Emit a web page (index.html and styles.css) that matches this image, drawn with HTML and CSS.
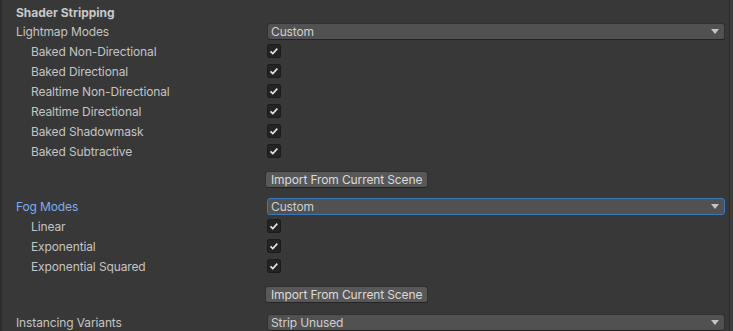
FILE: index.html
```html
<!DOCTYPE html>
<html>
<head>
<meta charset="utf-8">
<link rel="stylesheet" href="styles.css">
</head>
<body>
<div class="panel">
  <div class="main">
    <div class="header">Shader Stripping</div>

    <div class="row">
      <span class="label">Lightmap Modes</span>
      <div class="dropdown"><span>Custom</span><svg class="arrow" width="8" height="5" viewBox="0 0 8 5"><path d="M0 0H8L4 5Z" fill="#c4c4c4"/></svg></div>
    </div>
    <div class="row"><span class="label sub">Baked Non-Directional</span><span class="check"><svg width="14" height="14" viewBox="0 0 14 14"><path d="M3.5 7.3L5.8 9.5L10.3 4.6" fill="none" stroke="#e8e8e8" stroke-width="1.6"/></svg></span></div>
    <div class="row"><span class="label sub">Baked Directional</span><span class="check"><svg width="14" height="14" viewBox="0 0 14 14"><path d="M3.5 7.3L5.8 9.5L10.3 4.6" fill="none" stroke="#e8e8e8" stroke-width="1.6"/></svg></span></div>
    <div class="row"><span class="label sub">Realtime Non-Directional</span><span class="check"><svg width="14" height="14" viewBox="0 0 14 14"><path d="M3.5 7.3L5.8 9.5L10.3 4.6" fill="none" stroke="#e8e8e8" stroke-width="1.6"/></svg></span></div>
    <div class="row"><span class="label sub">Realtime Directional</span><span class="check"><svg width="14" height="14" viewBox="0 0 14 14"><path d="M3.5 7.3L5.8 9.5L10.3 4.6" fill="none" stroke="#e8e8e8" stroke-width="1.6"/></svg></span></div>
    <div class="row"><span class="label sub">Baked Shadowmask</span><span class="check"><svg width="14" height="14" viewBox="0 0 14 14"><path d="M3.5 7.3L5.8 9.5L10.3 4.6" fill="none" stroke="#e8e8e8" stroke-width="1.6"/></svg></span></div>
    <div class="row"><span class="label sub">Baked Subtractive</span><span class="check"><svg width="14" height="14" viewBox="0 0 14 14"><path d="M3.5 7.3L5.8 9.5L10.3 4.6" fill="none" stroke="#e8e8e8" stroke-width="1.6"/></svg></span></div>
    <div class="btnrow first"><span></span><button class="btn">Import From Current Scene</button></div>

    <div class="row">
      <span class="label focus">Fog Modes</span>
      <div class="dropdown focused"><span>Custom</span><svg class="arrow" width="8" height="5" viewBox="0 0 8 5"><path d="M0 0H8L4 5Z" fill="#c4c4c4"/></svg></div>
    </div>
    <div class="row"><span class="label sub">Linear</span><span class="check"><svg width="14" height="14" viewBox="0 0 14 14"><path d="M3.5 7.3L5.8 9.5L10.3 4.6" fill="none" stroke="#e8e8e8" stroke-width="1.6"/></svg></span></div>
    <div class="row"><span class="label sub">Exponential</span><span class="check"><svg width="14" height="14" viewBox="0 0 14 14"><path d="M3.5 7.3L5.8 9.5L10.3 4.6" fill="none" stroke="#e8e8e8" stroke-width="1.6"/></svg></span></div>
    <div class="row"><span class="label sub">Exponential Squared</span><span class="check"><svg width="14" height="14" viewBox="0 0 14 14"><path d="M3.5 7.3L5.8 9.5L10.3 4.6" fill="none" stroke="#e8e8e8" stroke-width="1.6"/></svg></span></div>
    <div class="btnrow second"><span></span><button class="btn">Import From Current Scene</button></div>

    <div class="row">
      <span class="label">Instancing Variants</span>
      <div class="dropdown"><span>Strip Unused</span><svg class="arrow" width="8" height="5" viewBox="0 0 8 5"><path d="M0 0H8L4 5Z" fill="#c4c4c4"/></svg></div>
    </div>
  </div>
  <div class="gutter"></div>
</div>
</body>
</html>
```

FILE: styles.css
```css
html, body {
  margin: 0;
  padding: 0;
  background: #383838;
  overflow: hidden;
}
body {
  font-family: Inter, "Noto Sans", sans-serif;
  font-size: 12px;
  letter-spacing: -0.12px;
  color: #c4c4c4;
}
.panel {
  display: flex;
  width: 733px;
  height: 331px;
  overflow: hidden;
}
.main {
  flex: 1;
  border-left: 2px solid #2c2c2c;
  padding: 3px 4px 0 14px;
  box-sizing: border-box;
}
.gutter {
  width: 3px;
  border-left: 1px solid #2a2a2a;
  background: #3d3d3d;
}
.header {
  height: 19px;
  line-height: 19px;
  font-weight: 700;
  letter-spacing: 0;
  color: #c8c8c8;
}
.row {
  display: grid;
  grid-template-columns: 251px 1fr;
  height: 20px;
  align-items: start;
}
.label {
  line-height: 19px;
  white-space: nowrap;
}
.label.sub {
  padding-left: 15px;
}
.label.focus {
  color: #7daef0;
}
.dropdown {
  margin-top: 1px;
  height: 17px;
  box-sizing: border-box;
  background: #515151;
  border: 1px solid #303030;
  border-bottom-color: #242424;
  border-radius: 3px;
  display: flex;
  align-items: center;
  justify-content: space-between;
  padding: 0 5px 0 3px;
  line-height: 15px;
  color: #d0d0d0;
}
.dropdown.focused {
  border-color: #3a79bb;
}
.arrow {
  display: block;
}
.check {
  margin-top: 2px;
  width: 14px;
  height: 14px;
  box-sizing: border-box;
  background: #242424;
  border: 1px solid #1b1b1b;
  border-radius: 2px;
  display: flex;
  align-items: center;
  justify-content: center;
}
.check svg {
  display: block;
  flex: none;
}
.btnrow {
  display: grid;
  grid-template-columns: 249px auto;
  justify-content: start;
}
.btnrow.first {
  padding: 9px 0 9px;
}
.btnrow.second {
  padding: 9px 0 10px;
}
.btn {
  font-family: Inter, "Noto Sans", sans-serif;
  font-size: 12px;
  letter-spacing: -0.12px;
  color: #dadada;
  background: #585858;
  border: 1px solid #303030;
  border-bottom-color: #242424;
  border-radius: 3px;
  height: 17px;
  padding: 0 5px;
  line-height: 15px;
  margin: 0;
  white-space: nowrap;
}
```
